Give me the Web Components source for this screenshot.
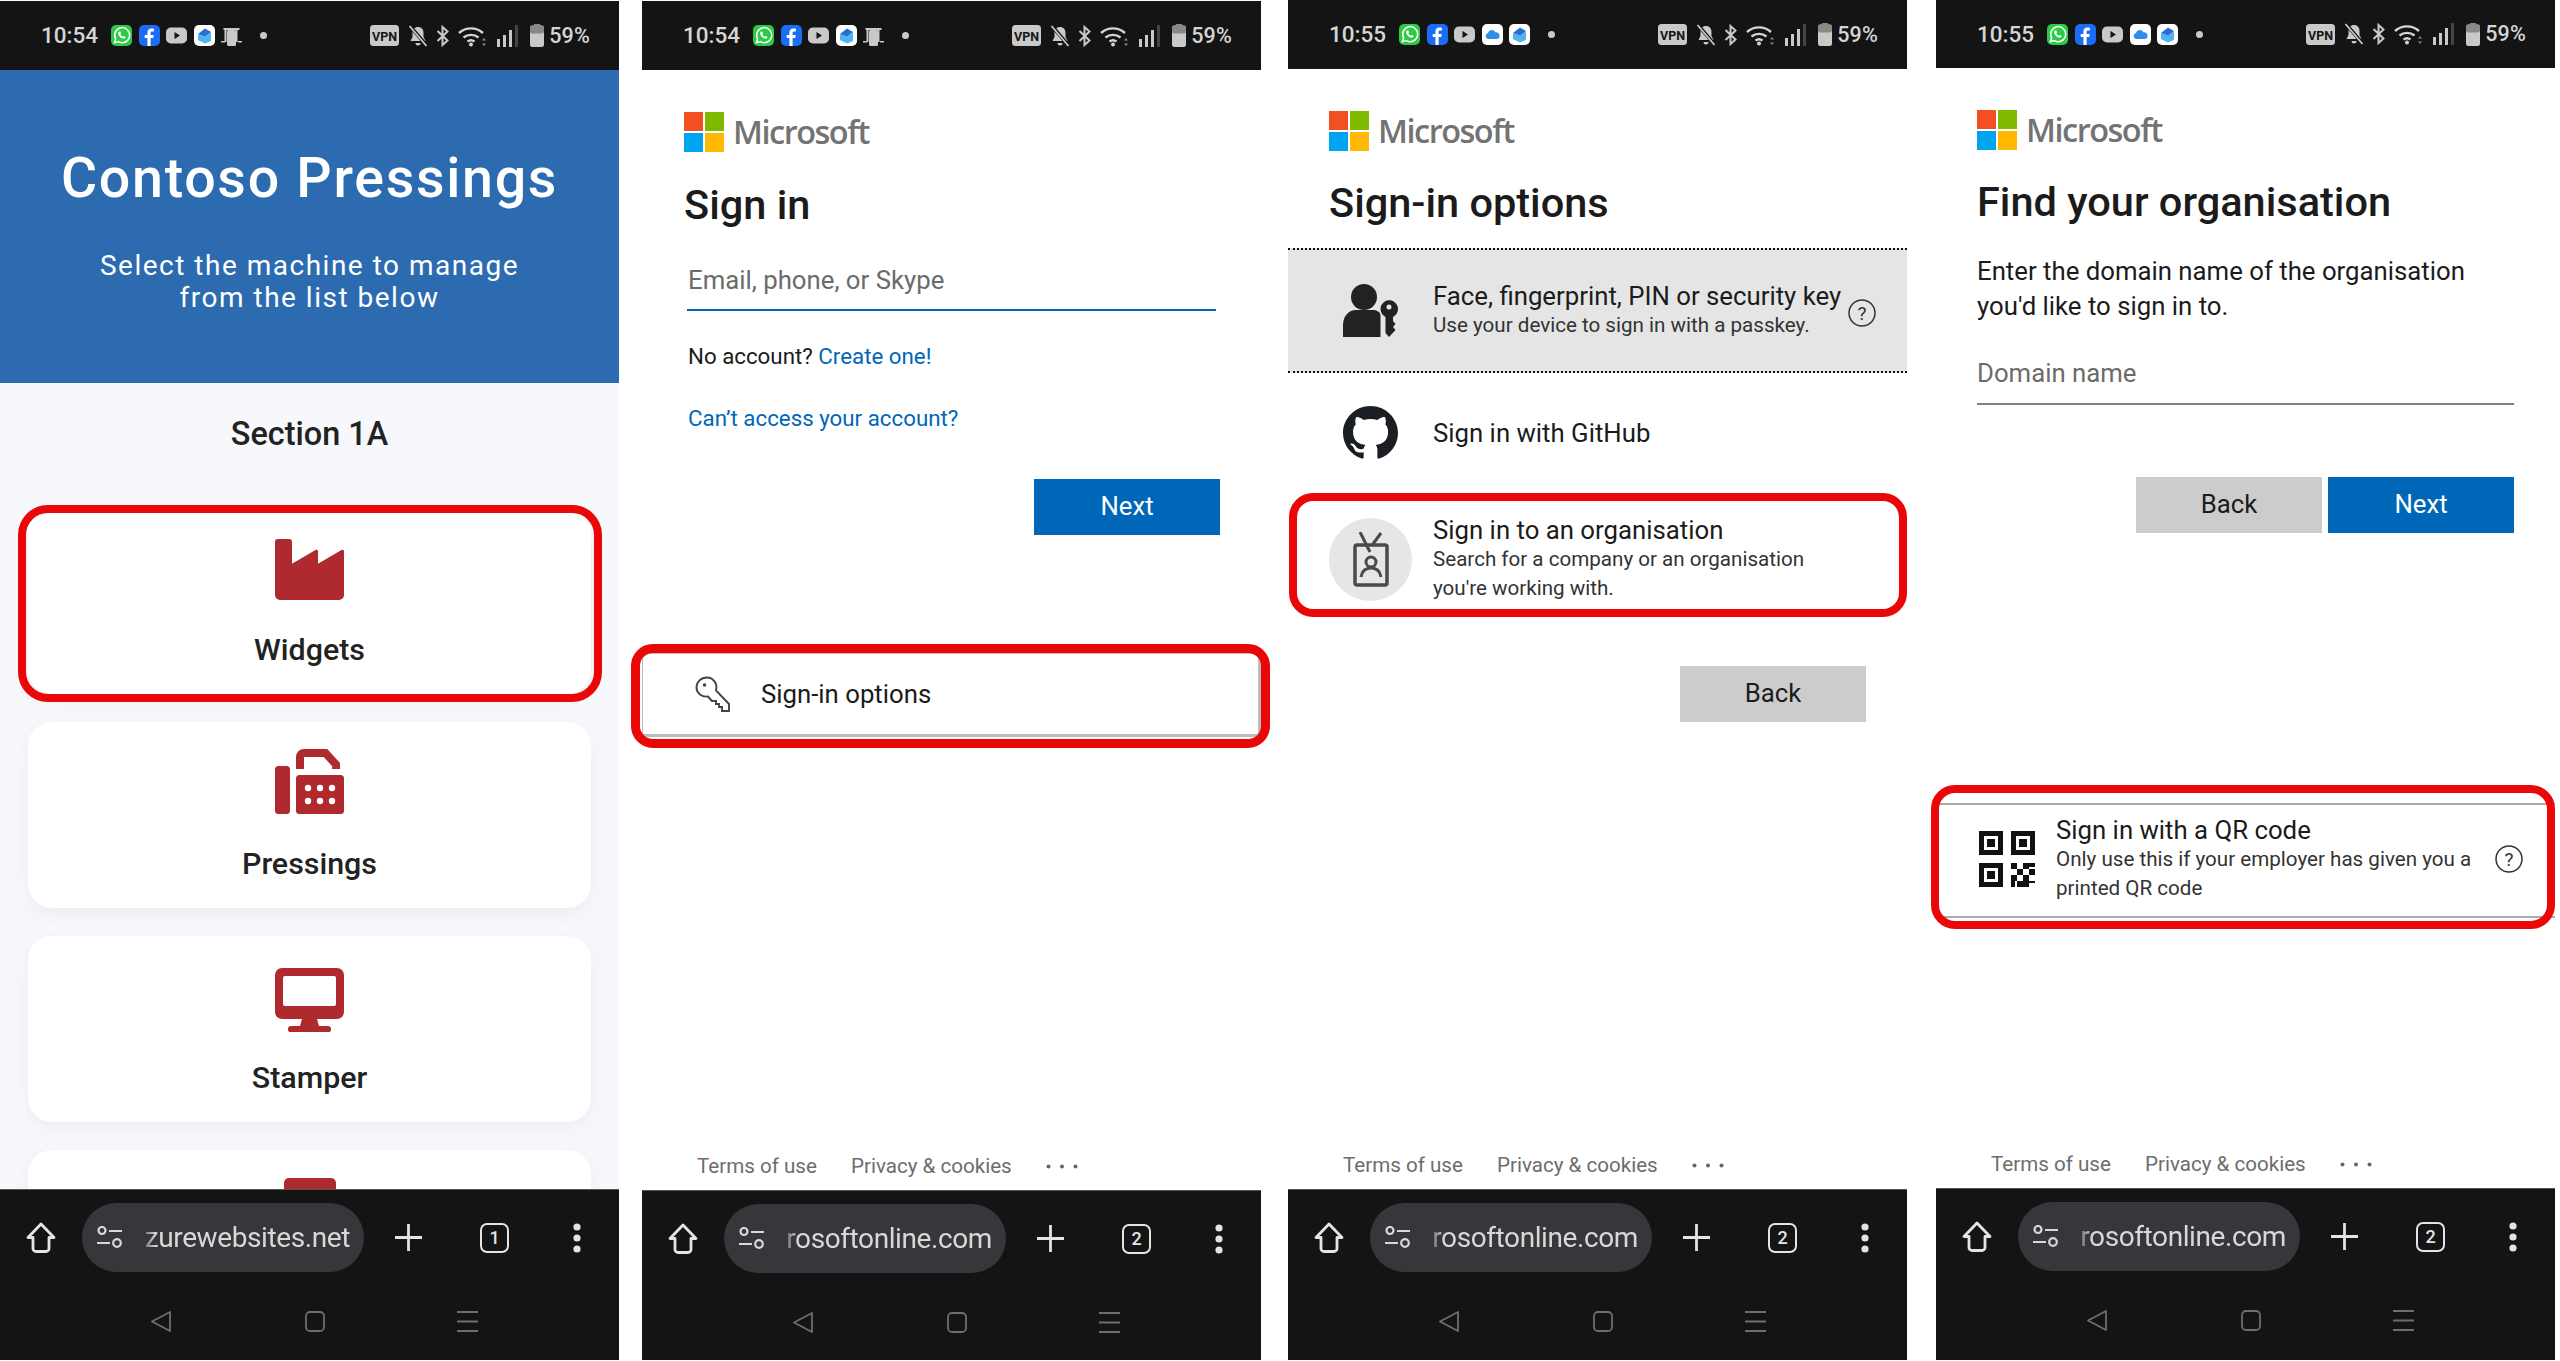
<!doctype html>
<html lang="en">
<head>
<meta charset="utf-8">
<title>Contoso Pressings sign-in steps</title>
<style>
  html,body{margin:0;background:#fff;height:100%;overflow:hidden}
  body{font-family:Roboto,"Liberation Sans",sans-serif}
  .row{display:flex;align-items:flex-start;height:1361px}
  .row > :nth-child(2){margin-left:23px}
  .row > :nth-child(3){margin-left:27px}
  .row > :nth-child(4){margin-left:29px}
</style>
</head>
<body>
<div class="row">
  <phone-frame time="10:54" url="zurewebsites.net" tabs="1" top="1" status="69" bar="171" apps="whatsapp facebook youtube mail mirror">
    <contoso-screen></contoso-screen>
  </phone-frame>
  <phone-frame time="10:54" url="rosoftonline.com" tabs="2" top="1" status="69" bar="170" apps="whatsapp facebook youtube mail mirror">
    <signin-screen></signin-screen>
  </phone-frame>
  <phone-frame time="10:55" url="rosoftonline.com" tabs="2" top="0" status="69" bar="171" apps="whatsapp facebook youtube cloud mail">
    <options-screen></options-screen>
  </phone-frame>
  <phone-frame time="10:55" url="rosoftonline.com" tabs="2" top="0" status="68" bar="172" apps="whatsapp facebook youtube cloud mail">
    <org-screen></org-screen>
  </phone-frame>
</div>

<script>
// small status bar glyphs, all drawn on a 21px tile
const APP_ICONS = {
  whatsapp: `<svg width="21" height="21" viewBox="0 0 21 21"><rect width="21" height="21" rx="5" fill="#2bcb45"/><path d="M3.500 17.700l1.100-4a7.500 7.500 0 1 1 2.800 2.900z" fill="none" stroke="#fff" stroke-width="1.500"/><path d="M8 6.400c-.9.600-1.100 1.700-.7 2.900.7 2.100 2.400 3.700 4.500 4.300 1.300.3 2.300 0 2.700-1l-.1-.9-1.700-.8-.8.900c-1.200-.4-2.100-1.400-2.600-2.600l.8-.8-.7-1.800z" fill="#fff"/></svg>`,
  facebook: `<svg width="21" height="21" viewBox="0 0 21 21"><rect width="21" height="21" rx="5" fill="#1a6ef5"/><path d="M11.600 21v-8h2.700l.5-3.100h-3.200V8c0-1 .4-1.600 1.700-1.600h1.600V3.700c-.5-.1-1.500-.2-2.300-.2-2.600 0-4.200 1.500-4.200 4.200v2.200H5.700V13h2.700v8z" fill="#fff"/></svg>`,
  youtube: `<svg width="21" height="21" viewBox="0 0 21 21"><rect y="2.500" width="21" height="16" rx="5" fill="#c9c9c9"/><path d="M8.500 7l5.500 3.500-5.500 3.500z" fill="#141414"/></svg>`,
  mail: `<svg width="21" height="21" viewBox="0 0 21 21"><rect width="21" height="21" rx="5" fill="#fff"/><path d="M4 9l7-5.500 6 3.500-6 5z" fill="#2a6fd6"/><path d="M4 9v6l7 3.500 6-2.500v-9l-6 5z" fill="#4fb4ef"/></svg>`,
  cloud: `<svg width="21" height="21" viewBox="0 0 21 21"><rect width="21" height="21" rx="5" fill="#fff"/><path d="M6.500 15a3 3 0 0 1-.6-5.900 4 4 0 0 1 7.500-.8 3.400 3.400 0 0 1 1.500 6.700z" fill="#2c8fe8"/></svg>`,
  mirror: `<svg width="21" height="21" viewBox="0 0 21 21"><path d="M2.500 3h16v2h-2v12h-2V5h-9v12h-2V5h-1z" fill="#c9c9c9"/><rect x="6" y="5" width="9" height="16" rx="1.500" fill="#c9c9c9"/><rect x="0" y="16" width="4" height="1.500" fill="#c9c9c9"/><rect x="17" y="16" width="4" height="1.500" fill="#c9c9c9"/></svg>`
};

const STATUS_RIGHT = `
  <svg width="29" height="21" viewBox="0 0 29 21" style="margin-right:9px"><rect width="29" height="21" rx="3.500" fill="#c9c9c9"/><text x="14.500" y="15.500" text-anchor="middle" font-family="Roboto" font-weight="700" font-size="12.500" fill="#141414">VPN</text></svg>
  <svg width="20" height="22" viewBox="0 0 20 22" style="margin-right:8px"><path d="M10 2c-3.500 0-5.500 2.500-5.500 6v4L2.500 16h15l-2-4V8C15.500 4.500 13.500 2 10 2z" fill="#c9c9c9"/><path d="M7.500 18a2.500 2.500 0 0 0 5 0z" fill="#c9c9c9"/><path d="M2 1l17 20" stroke="#141414" stroke-width="3.500"/><path d="M1.500 1l17 20" stroke="#c9c9c9" stroke-width="1.800"/></svg>
  <svg width="14" height="22" viewBox="0 0 14 22" style="margin-right:8px"><path d="M1.500 6l10 9.500L6.500 20V2l5 4.500-10 9.500" fill="none" stroke="#c9c9c9" stroke-width="2"/></svg>
  <svg width="29" height="22" viewBox="0 0 29 22" style="margin-right:10px"><g fill="none" stroke="#d5d5d5" stroke-width="2.400"><path d="M1 8a18 18 0 0 1 24 0"/><path d="M5.500 12.500a12 12 0 0 1 15 0"/><path d="M9.500 16.500a6 6 0 0 1 7 0"/></g><circle cx="13" cy="19.500" r="2" fill="#d5d5d5"/><path d="M26 13l2 2.500h-4zM26 21l2-2.500h-4z" fill="#888"/></svg>
  <svg width="21" height="22" viewBox="0 0 21 22" style="margin-right:12px"><rect x="0" y="14" width="3" height="8" fill="#c9c9c9"/><rect x="6" y="10" width="3" height="12" fill="#c9c9c9"/><rect x="12" y="5" width="3" height="17" fill="#c9c9c9"/><rect x="18" y="0" width="3" height="22" fill="#444"/></svg>
  <svg width="14" height="23" viewBox="0 0 14 23" style="margin-right:5px"><rect y="1.500" width="14" height="21.500" rx="2.500" fill="#c9c9c9"/><rect y="1.500" width="14" height="8" rx="2" fill="#888"/><rect x="4" width="6" height="3" fill="#888"/></svg>`;

class StatusBar extends HTMLElement {
  connectedCallback() {
    const apps = (this.getAttribute("apps") || "").split(" ");
    this.attachShadow({ mode: "open" });
    this.shadowRoot.innerHTML = `
      <style>
        :host{display:flex;align-items:center;background:#141414;color:#d5d5d5;padding:0 29px 0 41px;box-sizing:border-box;
          font:500 22.500px/1 Roboto,sans-serif;height:100%}
        .time{width:70px}
        .apps{display:flex;gap:6.500px;align-items:center}
        .dot{width:7px;height:7px;border-radius:50%;background:#c9c9c9;margin-left:11px}
        .right{margin-left:auto;display:flex;align-items:center}
        .pct{font-size:21.500px;font-weight:500;letter-spacing:.2px}
      </style>
      <span class="time">${this.getAttribute("time")}</span>
      <div class="apps">${apps.map((a) => APP_ICONS[a]).join("")}<span class="dot"></span></div>
      <div class="right">${STATUS_RIGHT}<span class="pct">59%</span></div>`;
  }
}
customElements.define("status-bar", StatusBar);

class BrowserBar extends HTMLElement {
  connectedCallback() {
    this.attachShadow({ mode: "open" });
    this.shadowRoot.innerHTML = `
      <style>
        :host{display:block;background:#141414;height:100%;box-sizing:border-box;border-top:1px solid #555;padding-top:13px;color:#e4e4e4}
        .tools{display:flex;align-items:center;height:69px;padding-left:26px}
        .pill{width:282px;height:69px;margin-left:26px;margin-right:31px;border-radius:35px;background:#36373a;display:flex;align-items:center;padding-left:15px;box-sizing:border-box}
        .url{width:212px;margin-left:16px;display:flex;justify-content:flex-end;white-space:nowrap;
          font:400 28px/40px Roboto,sans-serif;letter-spacing:-.4px;color:#d8d8d8;
          -webkit-mask-image:linear-gradient(90deg,transparent 0,#000 18px)}
        .tab{margin-left:58px;width:29px;height:30px;border:2.500px solid #e4e4e4;border-radius:7px;box-sizing:border-box;text-align:center;font:500 18px/25px Roboto,sans-serif}
        .dots{margin-left:64px}
        .nav{display:flex;padding-left:151px;gap:134px;margin-top:39px;height:22px}
      </style>
      <div class="tools">
        <svg width="30" height="31" viewBox="0 0 30 31"><path d="M15 2L2 15.500h5v11a3 3 0 0 0 3 3h10a3 3 0 0 0 3-3v-11h5z" fill="none" stroke="#e4e4e4" stroke-width="2.800" stroke-linejoin="round"/></svg>
        <div class="pill">
          <svg width="25" height="23" viewBox="0 0 25 23" fill="none" stroke="#d8d8d8" stroke-width="2.200"><circle cx="5" cy="4.500" r="3.500"/><path d="M12 5h13M0 17h13"/><circle cx="20" cy="17" r="3.800"/></svg>
          <span class="url">${this.getAttribute("url")}</span>
        </div>
        <svg width="27" height="27" viewBox="0 0 27 27"><path d="M13.500 0v27M0 13.500h27" stroke="#e4e4e4" stroke-width="2.800"/></svg>
        <span class="tab">${this.getAttribute("tabs")}</span>
        <svg class="dots" width="8" height="30" viewBox="0 0 8 30" fill="#e4e4e4"><circle cx="4" cy="4" r="3.600"/><circle cx="4" cy="15" r="3.600"/><circle cx="4" cy="26" r="3.600"/></svg>
      </div>
      <div class="nav">
        <svg width="20" height="21" viewBox="0 0 20 21" fill="none" stroke="#6e6e6e" stroke-width="1.800"><path d="M19 1v19L1 10.500z" stroke-linejoin="round"/></svg>
        <svg width="20" height="21" viewBox="0 0 20 21" fill="none" stroke="#6e6e6e" stroke-width="1.800"><rect x="1" y="1" width="18" height="19" rx="4"/></svg>
        <svg width="21" height="21" viewBox="0 0 21 21" stroke="#6e6e6e" stroke-width="1.800" style="margin-left:-2px"><path d="M0 1h21M0 10.500h21M0 20h21"/></svg>
      </div>`;
  }
}
customElements.define("browser-bar", BrowserBar);

// one phone: status bar, page area, browser chrome
class PhoneFrame extends HTMLElement {
  connectedCallback() {
    const a = (n) => this.getAttribute(n);
    this.attachShadow({ mode: "open" });
    this.shadowRoot.innerHTML = `
      <style>
        :host{display:flex;flex-direction:column;flex:none;width:619px;height:${1360 - +a("top")}px;margin-top:${a("top")}px;background:#fff;position:relative}
        status-bar{flex:none;height:${a("status")}px}
        .page{flex:1;min-height:0;display:flex;flex-direction:column}
        browser-bar{flex:none;height:${a("bar")}px;position:relative}
      </style>
      <status-bar time="${a("time")}" apps="${a("apps")}"></status-bar>
      <div class="page"><slot></slot></div>
      <browser-bar url="${a("url")}" tabs="${a("tabs")}"></browser-bar>`;
  }
}
customElements.define("phone-frame", PhoneFrame);

// red annotation drawn over whatever it wraps
class RedMark extends HTMLElement {
  connectedCallback() {
    const [t, r, b, l] = (this.getAttribute("out") || "0 0 0 0").split(" ");
    this.attachShadow({ mode: "open" });
    this.shadowRoot.innerHTML = `
      <style>
        :host{display:block;position:relative}
        .mark{position:absolute;top:${-t}px;right:${-r}px;bottom:${-b}px;left:${-l}px;border:${this.getAttribute("w") || 8.5}px solid #e90707;border-radius:${this.getAttribute("radius") || 22}px;pointer-events:none}
      </style>
      <slot></slot><div class="mark"></div>`;
  }
}
customElements.define("red-mark", RedMark);

class MachineCard extends HTMLElement {
  connectedCallback() {
    this.attachShadow({ mode: "open" });
    this.shadowRoot.innerHTML = `
      <style>
        :host{display:flex;flex-direction:column;align-items:center;height:186px;background:#fff;border-radius:24px;box-shadow:0 6px 18px rgba(60,70,110,.06);color:#222;box-sizing:border-box}
        .icon{height:118px;display:flex;align-items:flex-start;justify-content:center}
        .label{font:500 30.400px/48px Roboto,sans-serif}
      </style>
      <div class="icon"><slot name="icon"></slot></div>
      <div class="label"><slot></slot></div>`;
  }
}
customElements.define("machine-card", MachineCard);

class ContosoScreen extends HTMLElement {
  connectedCallback() {
    this.attachShadow({ mode: "open" });
    this.shadowRoot.innerHTML = `
      <style>
        :host{display:block;flex:1;min-height:0;overflow:hidden;background:#f6f8fc;color:#222}
        header{background:#2d6bb0;color:#fff;height:313px;box-sizing:border-box;padding-top:79px;text-align:center}
        h1{margin:0;font:500 55.500px/60px Roboto,sans-serif;letter-spacing:1.700px}
        p{margin:41px 0 0;font:400 28px/32px Roboto,sans-serif;letter-spacing:1.500px}
        h2{margin:33px 0 0;font:500 32.400px/36px Roboto,sans-serif;text-align:center}
        .cards{display:flex;flex-direction:column;gap:28px;margin:56px 28px 0 28px}
        svg{display:block;fill:#ae2a2e}
      </style>
      <header>
        <h1>Contoso Pressings</h1>
        <p>Select the machine to manage<br>from the list below</p>
      </header>
      <h2>Section 1A</h2>
      <div class="cards">
        <red-mark out="3 11 8 10" w="8" radius="30">
          <machine-card>
            <svg slot="icon" width="69" height="61" viewBox="0 0 69 61" style="margin-top:31px"><path d="M3 0h11a3 3 0 0 1 3 3v21.700L40.500 11c1.300-.7 2.500 0 2.500 1.500v12.200L66.500 11c1.300-.7 2.500 0 2.500 1.500V56a5 5 0 0 1-5 5H5a5 5 0 0 1-5-5V3a3 3 0 0 1 3-3z"/></svg>
            Widgets
          </machine-card>
        </red-mark>
        <machine-card>
          <svg slot="icon" width="69" height="65" viewBox="0 0 69 65" style="margin-top:27px"><rect y="17" width="15" height="48" rx="3.500"/><rect x="21" y="26" width="48" height="39" rx="3.500"/><path d="M25 20V8a4 4 0 0 1 4-4h21.500L61 15.500V20" fill="none" stroke="#ae2a2e" stroke-width="8"/><g fill="#fff"><circle cx="33" cy="39" r="3.200"/><circle cx="45" cy="39" r="3.200"/><circle cx="57" cy="39" r="3.200"/><circle cx="33" cy="52" r="3.200"/><circle cx="45" cy="52" r="3.200"/><circle cx="57" cy="52" r="3.200"/></g></svg>
          Pressings
        </machine-card>
        <machine-card>
          <svg slot="icon" width="69" height="64" viewBox="0 0 69 64" style="margin-top:32px"><path fill-rule="evenodd" d="M7 0h55a7 7 0 0 1 7 7v37a7 7 0 0 1-7 7H7a7 7 0 0 1-7-7V7a7 7 0 0 1 7-7zm3 8a2 2 0 0 0-2 2v26a2 2 0 0 0 2 2h49a2 2 0 0 0 2-2V10a2 2 0 0 0-2-2z"/><path d="M27 51h15l2 7H25z"/><rect x="13" y="58" width="43" height="6.500" rx="3.200"/></svg>
          Stamper
        </machine-card>
        <machine-card>
          <svg slot="icon" width="52" height="40" viewBox="0 0 52 40" style="margin-top:28px"><rect width="52" height="40" rx="5"/></svg>
        </machine-card>
      </div>`;
  }
}
customElements.define("contoso-screen", ContosoScreen);

class MsLogo extends HTMLElement {
  connectedCallback() {
    this.attachShadow({ mode: "open" });
    this.shadowRoot.innerHTML = `
      <style>
        :host{display:flex;align-items:center;height:40px;gap:9px;font:600 32.500px/40px "Open Sans",Roboto,sans-serif;color:#737373;letter-spacing:-1.500px}
        svg{flex:none}
      </style>
      <svg width="40" height="40" viewBox="0 0 40 40"><rect width="19" height="19" fill="#f25022"/><rect x="21" width="19" height="19" fill="#7fba00"/><rect y="21" width="19" height="19" fill="#00a4ef"/><rect x="21" y="21" width="19" height="19" fill="#ffb900"/></svg>
      <span>Microsoft</span>`;
  }
}
customElements.define("ms-logo", MsLogo);

class MsButton extends HTMLElement {
  connectedCallback() {
    const primary = this.hasAttribute("primary");
    this.attachShadow({ mode: "open" });
    this.shadowRoot.innerHTML = `
      <style>
        :host{display:flex;align-items:center;justify-content:center;width:186px;height:56px;font:400 25.750px/1 Roboto,sans-serif;
          background:${primary ? "#0067b8" : "#cccccc"};color:${primary ? "#fff" : "#1b1b1b"}}
      </style><slot></slot>`;
  }
}
customElements.define("ms-button", MsButton);

class MsFooter extends HTMLElement {
  connectedCallback() {
    this.attachShadow({ mode: "open" });
    this.shadowRoot.innerHTML = `
      <style>
        :host{display:flex;align-items:center;gap:34px;height:26px;margin-top:auto;margin-bottom:11px;padding-left:55px;font:400 20.600px/26px Roboto,sans-serif;color:#6d6d6d}
        svg{display:block}
      </style>
      <span>Terms of use</span><span>Privacy &amp; cookies</span>
      <svg width="32" height="5" viewBox="0 0 32 5" fill="#666"><circle cx="2.500" cy="2.500" r="2"/><circle cx="16" cy="2.500" r="2"/><circle cx="29.500" cy="2.500" r="2"/></svg>`;
  }
}
customElements.define("ms-footer", MsFooter);

class HelpIcon extends HTMLElement {
  connectedCallback() {
    this.attachShadow({ mode: "open" });
    this.shadowRoot.innerHTML = `
      <style>:host{display:block;flex:none;width:28px;height:28px}</style>
      <svg width="28" height="28" viewBox="0 0 28 28"><circle cx="14" cy="14" r="13" fill="none" stroke="#333" stroke-width="1.500"/><text x="14" y="20.500" text-anchor="middle" font-family="Roboto" font-size="19" fill="#333">?</text></svg>`;
  }
}
customElements.define("help-icon", HelpIcon);

// row in a sign-in options list, icon + title + description
class OptionRow extends HTMLElement {
  connectedCallback() {
    this.attachShadow({ mode: "open" });
    this.shadowRoot.innerHTML = `
      <style>
        :host{display:flex;align-items:center;box-sizing:border-box;color:#1b1b1b}
        .icon{flex:none;display:flex;justify-content:center;align-items:center;width:var(--icon-w,83px);margin-left:var(--icon-x,41px);margin-right:var(--icon-gap,21px)}
        .text{flex:1;min-width:0;font:400 25.750px/30px Roboto,sans-serif}
        ::slotted([slot="sub"]){display:block;font-size:20.600px;line-height:29px;color:#333}
      </style>
      <div class="icon"><slot name="icon"></slot></div>
      <div class="text"><slot></slot><slot name="sub"></slot></div>
      <slot name="end"></slot>`;
  }
}
customElements.define("option-row", OptionRow);

class SigninScreen extends HTMLElement {
  connectedCallback() {
    this.attachShadow({ mode: "open" });
    this.shadowRoot.innerHTML = `
      <style>
        :host{display:flex;flex-direction:column;flex:1;min-height:0;padding:42px 0 0 42px;box-sizing:border-box;color:#1b1b1b}
        h1{margin:28px 0 0;font:500 41.500px/50px Roboto,sans-serif}
        .field{margin:35px 0 0 3px;width:529px;border-bottom:2px solid #0067b8;padding-bottom:14px;font:400 25.750px/30px Roboto,sans-serif;color:#6b6b6b;box-sizing:content-box;text-indent:1px}
        p{margin:30px 0 0 4px;font:400 22.300px/30px Roboto,sans-serif}
        p + p{margin-top:32px}
        a{color:#0067b8;text-decoration:none}
        ms-button{margin:46px 0 0 350px}
        .box{display:flex;align-items:center;gap:30px;height:84px;box-sizing:border-box;padding-left:52px;background:#fff;border:1px solid #bbb;border-width:1px 3px 3px 1px;font:400 25.750px/30px Roboto,sans-serif}
        red-mark{margin:118px 0 0 -42px}
      </style>
      <ms-logo></ms-logo>
      <h1>Sign in</h1>
      <div class="field">Email, phone, or Skype</div>
      <p>No account? <a>Create one!</a></p>
      <p><a>Can’t access your account?</a></p>
      <ms-button primary>Next</ms-button>
      <red-mark out="9 9 11 11" w="9" radius="22">
        <div class="box">
          <svg width="36" height="36" viewBox="0 0 36 36" fill="none" stroke="#444" stroke-width="1.900"><path d="M12 1.500C6 1.500 1.500 6 1.500 11.500 1.500 17 7 21.500 13 20.500L17 25h4v3h3v3h3v4h7v-7L21 14.500C23 7.500 18 1.500 12 1.500z"/><circle cx="9.500" cy="9" r="1.800" fill="#444" stroke="none"/></svg>
          Sign-in options
        </div>
      </red-mark>
      <ms-footer style="margin-left:-42px"></ms-footer>`;
  }
}
customElements.define("signin-screen", SigninScreen);

class OptionsScreen extends HTMLElement {
  connectedCallback() {
    this.attachShadow({ mode: "open" });
    this.shadowRoot.innerHTML = `
      <style>
        :host{display:flex;flex-direction:column;flex:1;min-height:0;padding-top:42px;box-sizing:border-box;color:#1b1b1b}
        ms-logo,h1{margin-left:41px}
        h1{margin-top:27px;margin-bottom:20px;margin-right:0;font:500 41.500px/50px Roboto,sans-serif}
        .passkey{height:125px;background:#e5e5e5;border-top:2px dotted #111;border-bottom:2px dotted #111;padding-right:31px}
        .github{height:120px}
        red-mark{margin-top:9px}
        .org{height:114px}
        .avatar{width:83px;height:83px;border-radius:50%;background:#e6e6e6;display:flex;align-items:center;justify-content:center}
        ms-button{margin:50px 0 0 392px}
        help-icon{margin-top:4px}
      </style>
      <ms-logo></ms-logo>
      <h1>Sign-in options</h1>
      <option-row class="passkey">
        <svg slot="icon" width="55" height="53" viewBox="0 0 55 53" fill="#222"><circle cx="21" cy="13" r="13"/><path d="M0 53V41c0-9 6-15 13-15h16c5 0 8 2 8.500 5V53z"/><path fill-rule="evenodd" d="M46 16a9 9 0 0 1 9 9c0 3.500-2 6.500-5 8v4l2.500 3-2.500 3 2.500 3-6.500 7-3.500-4V33c-3-1.500-5-4.500-5-8a9 9 0 0 1 9-9zm0 4.500a2.500 2.500 0 1 0 0 5 2.500 2.500 0 0 0 0-5z"/></svg>
        Face, fingerprint, PIN or security key
        <span slot="sub">Use your device to sign in with a passkey.</span>
        <help-icon slot="end"></help-icon>
      </option-row>
      <option-row class="github">
        <svg slot="icon" width="55" height="54" viewBox="0 0 16 16" preserveAspectRatio="none"><path fill="#1b1f23" d="M8 0C3.580 0 0 3.580 0 8c0 3.540 2.290 6.530 5.470 7.590.4.070.55-.17.55-.38 0-.19-.01-.82-.01-1.490-2.010.37-2.530-.49-2.690-.94-.09-.23-.48-.94-.82-1.130-.28-.15-.68-.52-.01-.53.63-.01 1.080.58 1.230.82.72 1.210 1.870.87 2.330.66.07-.52.28-.87.51-1.070-1.780-.2-3.640-.89-3.640-3.950 0-.87.31-1.590.82-2.150-.08-.2-.36-1.020.08-2.120 0 0 .67-.21 2.200.82.64-.18 1.320-.27 2-.27.68 0 1.360.09 2 .27 1.530-1.040 2.200-.82 2.200-.82.44 1.100.16 1.920.08 2.120.51.56.82 1.270.82 2.150 0 3.070-1.870 3.750-3.650 3.950.29.25.54.73.54 1.480 0 1.070-.01 1.930-.01 2.200 0 .21.15.46.55.38A8.013 8.013 0 0 0 16 8c0-4.420-3.580-8-8-8z"/></svg>
        Sign in with GitHub
      </option-row>
      <red-mark out="9 0 1 -1" w="8.500" radius="24">
        <option-row class="org">
          <div slot="icon" class="avatar">
            <svg width="36" height="55" viewBox="0 0 36 55" fill="none" stroke="#4a4a4a" stroke-width="3"><path d="M7 0l10 20M28 1l-8 11"/><rect x="2" y="13" width="32" height="40" rx="2" stroke-width="3.500"/><circle cx="18" cy="30" r="5"/><path d="M8 45c1-6 5-9 10-9s9 3 10 9"/></svg>
          </div>
          Sign in to an organisation
          <span slot="sub">Search for a company or an organisation<br>you're working with.</span>
        </option-row>
      </red-mark>
      <ms-button>Back</ms-button>
      <ms-footer></ms-footer>`;
  }
}
customElements.define("options-screen", OptionsScreen);

class OrgScreen extends HTMLElement {
  connectedCallback() {
    this.attachShadow({ mode: "open" });
    this.shadowRoot.innerHTML = `
      <style>
        :host{display:flex;flex-direction:column;flex:1;min-height:0;padding-top:42px;box-sizing:border-box;color:#1b1b1b}
        ms-logo,h1,p,.field,.buttons{margin-left:41px}
        h1{margin-top:27px;margin-bottom:0;font:500 41.500px/50px Roboto,sans-serif}
        p{margin-top:27px;margin-bottom:0;font:400 25.750px/35px Roboto,sans-serif}
        .field{margin-top:34px;width:537px;border-bottom:2px solid #808080;padding-bottom:15px;font:400 25.750px/30px Roboto,sans-serif;color:#6b6b6b}
        .buttons{display:flex;justify-content:flex-end;gap:6px;width:537px;margin-top:72px}
        red-mark{margin-top:270px}
        .qr{height:115px;padding-bottom:4px;border-top:2px solid #aaa;border-bottom:2px solid #aaa;--icon-x:43px;--icon-w:56px;--icon-gap:21px;padding-right:32px}
      </style>
      <ms-logo></ms-logo>
      <h1>Find your organisation</h1>
      <p>Enter the domain name of the organisation<br>you'd like to sign in to.</p>
      <div class="field">Domain name</div>
      <div class="buttons"><ms-button>Back</ms-button><ms-button primary>Next</ms-button></div>
      <red-mark out="18 0 11 5" w="8.500" radius="24">
        <option-row class="qr">
          <svg slot="icon" width="56" height="56" viewBox="0 0 56 56">
            <g fill="none" stroke="#111" stroke-width="5"><rect x="2.500" y="2.500" width="19" height="19"/><rect x="34.500" y="2.500" width="19" height="19"/><rect x="2.500" y="34.500" width="19" height="19"/></g>
            <g fill="#111"><rect x="8" y="8" width="8" height="8"/><rect x="40" y="8" width="8" height="8"/><rect x="8" y="40" width="8" height="8"/>
            <path d="M32 32h6v6h-6zM44 32h6v6h-6zM50 32h6v4h-6zM38 38h6v6h-6zM32 44h6v6h-6zM44 44h6v6h-6zM50 38h6v6h-6zM38 50h12v6H38zM32 50h4v6h-4zM50 50h6v2h-6z"/></g>
          </svg>
          Sign in with a QR code
          <span slot="sub">Only use this if your employer has given you a<br>printed QR code</span>
          <help-icon slot="end"></help-icon>
        </option-row>
      </red-mark>
      <ms-footer></ms-footer>`;
  }
}
customElements.define("org-screen", OrgScreen);
</script>
</body>
</html>
